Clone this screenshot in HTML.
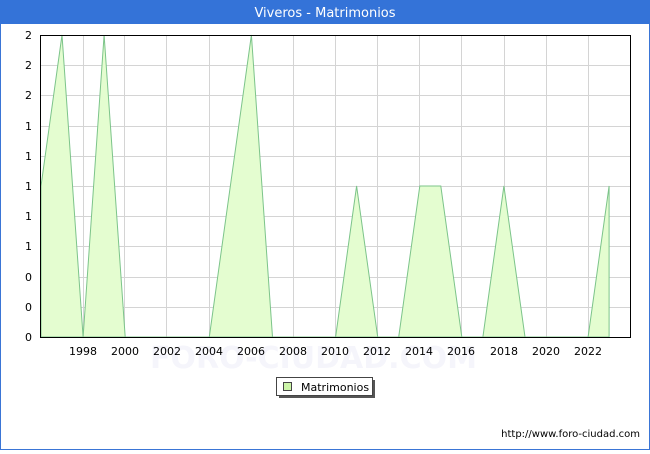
<!DOCTYPE html>
<html><head><meta charset="utf-8"><style>
body{margin:0;width:650px;height:450px;overflow:hidden;font-family:"DejaVu Sans","Liberation Sans",sans-serif;}
</style></head><body>
<svg width="650" height="450" xmlns="http://www.w3.org/2000/svg" font-family="DejaVu Sans, Liberation Sans, sans-serif">
<rect x="0.5" y="0.5" width="649" height="449" fill="#fff" stroke="#3a75d6"/>
<rect x="0" y="0" width="650" height="24" fill="#3473d8"/>
<text x="325" y="17" text-anchor="middle" font-size="13" fill="#fff">Viveros - Matrimonios</text>
<g stroke="#d4d4d4" stroke-width="1">
<line x1="40" x2="631" y1="65.5" y2="65.5"/><line x1="40" x2="631" y1="95.5" y2="95.5"/><line x1="40" x2="631" y1="126.5" y2="126.5"/><line x1="40" x2="631" y1="156.5" y2="156.5"/><line x1="40" x2="631" y1="186.5" y2="186.5"/><line x1="40" x2="631" y1="216.5" y2="216.5"/><line x1="40" x2="631" y1="246.5" y2="246.5"/><line x1="40" x2="631" y1="277.5" y2="277.5"/><line x1="40" x2="631" y1="307.5" y2="307.5"/>
<line x1="83.5" x2="83.5" y1="35" y2="337"/><line x1="124.5" x2="124.5" y1="35" y2="337"/><line x1="166.5" x2="166.5" y1="35" y2="337"/><line x1="209.5" x2="209.5" y1="35" y2="337"/><line x1="251.5" x2="251.5" y1="35" y2="337"/><line x1="293.5" x2="293.5" y1="35" y2="337"/><line x1="335.5" x2="335.5" y1="35" y2="337"/><line x1="377.5" x2="377.5" y1="35" y2="337"/><line x1="419.5" x2="419.5" y1="35" y2="337"/><line x1="461.5" x2="461.5" y1="35" y2="337"/><line x1="504.5" x2="504.5" y1="35" y2="337"/><line x1="546.5" x2="546.5" y1="35" y2="337"/><line x1="588.5" x2="588.5" y1="35" y2="337"/>
</g>
<text x="150" y="368" font-size="30" fill="#f5f5fb" font-weight="bold">FORO-CIUDAD.COM</text>
<polygon fill="#e4fdd0" stroke="#7cc48a" stroke-width="1" points="41,337 41,186 62,35 83.1,337 104.1,35 125.2,337 209.3,337 251.4,35 272.5,337 335.6,337 356.6,186 377.7,337 398.7,337 419.8,186 440.8,186 461.8,337 482.9,337 503.9,186 525,337 588.1,337 609.1,186 609.1,337"/>
<rect x="40.5" y="35.5" width="590" height="302" fill="none" stroke="#000"/>
<g font-size="11" fill="#000" text-anchor="end">
<text x="32" y="39">2</text><text x="32" y="69">2</text><text x="32" y="99">2</text><text x="32" y="130">1</text><text x="32" y="160">1</text><text x="32" y="190">1</text><text x="32" y="220">1</text><text x="32" y="250">1</text><text x="32" y="281">0</text><text x="32" y="311">0</text><text x="32" y="341">0</text>
</g>
<g font-size="11" fill="#000" text-anchor="middle">
<text x="83" y="355">1998</text><text x="125" y="355">2000</text><text x="167" y="355">2002</text><text x="209" y="355">2004</text><text x="251" y="355">2006</text><text x="293" y="355">2008</text><text x="335" y="355">2010</text><text x="377" y="355">2012</text><text x="419" y="355">2014</text><text x="461" y="355">2016</text><text x="504" y="355">2018</text><text x="546" y="355">2020</text><text x="588" y="355">2022</text>
</g>
<rect x="279" y="380" width="96" height="18" fill="#555"/>
<rect x="276.5" y="377.5" width="96" height="18" fill="#fff" stroke="#444"/>
<rect x="283.5" y="382.5" width="8" height="8" fill="#ccf5a8" stroke="#444"/>
<text x="301" y="391" font-size="11">Matrimonios</text>
<text x="640" y="437" font-size="10" text-anchor="end">http://www.foro-ciudad.com</text>
</svg>
</body></html>
